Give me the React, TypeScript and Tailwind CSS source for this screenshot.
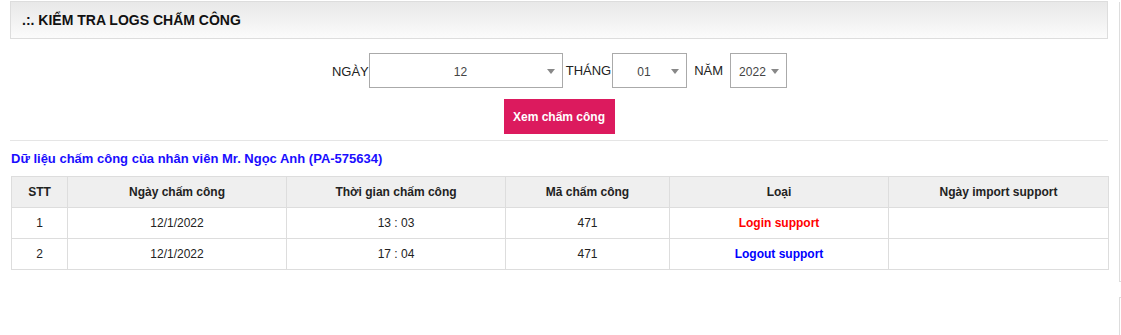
const ROWS = [
  { stt: 1, ngay: '12/1/2022', gio: '13 : 03', ma: '471', loai: 'Login support', color: 'text-[#ff0000]' },
  { stt: 2, ngay: '12/1/2022', gio: '17 : 04', ma: '471', loai: 'Logout support', color: 'text-[#0000ff]' },
]

function Select({ value, w, pl }: { value: string; w: string; pl: string }) {
  return (
    <div className={`${w} h-[35px] border border-[#aaa] bg-white flex items-center relative`}>
      <span className={`${pl} text-[12px] text-[#444] leading-none pt-[3px]`}>{value}</span>
      <span className="absolute right-[7px] top-[15px] w-0 h-0 border-l-[4px] border-r-[4px] border-t-[5px] border-l-transparent border-r-transparent border-t-[#888]" />
    </div>
  )
}

export default function App() {
  return (
    <div className="flex font-['Liberation_Sans',Arial,sans-serif] text-[#222] bg-white h-[335px] overflow-hidden">
      <div className="w-[1119px] shrink-0 pl-[10px] pr-[11px] pt-[1px]">
        {/* Header */}
        <div className="h-[38px] border border-[#ddd] bg-gradient-to-b from-[#e8e8e8] to-[#fbfbfb] flex items-center pl-[11px]">
          <span className="text-[14px] font-bold text-[#111]">.:. KIỂM TRA LOGS CHẤM CÔNG</span>
        </div>

        {/* Form */}
        <div className="flex justify-center items-start mt-[14px] text-[13px] text-[#222]">
          <span className="mt-[9px] ml-[1px]">NGÀY</span>
          <Select value="12" w="w-[194px]" pl="pl-[84px]" />
          <span className="mt-[8px] ml-[3px] mr-[1px]">THÁNG</span>
          <Select value="01" w="w-[75px]" pl="pl-[24px]" />
          <span className="mt-[8px] ml-[7px] mr-[7px]">NĂM</span>
          <Select value="2022" w="w-[57px]" pl="pl-[8px]" />
        </div>
        <div className="flex justify-center mt-[11px]">
          <button className="w-[111px] h-[35px] bg-[#dc1a5e] text-white text-[12px] font-bold">Xem chấm công</button>
        </div>
        <div className="border-t border-[#e5e5e5] mt-[6px]" />

        {/* Title */}
        <div className="mt-[8px] ml-[1px] text-[13px] font-bold text-[#1a0dff]">Dữ liệu chấm công của nhân viên Mr. Ngọc Anh (PA-575634)</div>

        <table className="mt-[7px] ml-[1px] w-[1097px] border-collapse text-[12px] text-[#222] table-fixed">
          <colgroup>
            <col className="w-[56px]" />
            <col className="w-[219px]" />
            <col className="w-[219px]" />
            <col className="w-[164px]" />
            <col className="w-[219px]" />
            <col className="w-[220px]" />
          </colgroup>
          <thead>
            <tr className="bg-[#efefef] h-[31px]">
              {['STT', 'Ngày chấm công', 'Thời gian chấm công', 'Mã chấm công', 'Loại', 'Ngày import support'].map((h) => (
                <th key={h} className="border border-[#ddd] font-bold text-center align-middle">{h}</th>
              ))}
            </tr>
          </thead>
          <tbody>
            {ROWS.map((r) => (
              <tr key={r.stt} className="h-[31px]">
                <td className="border border-[#ddd] text-center">{r.stt}</td>
                <td className="border border-[#ddd] text-center">{r.ngay}</td>
                <td className="border border-[#ddd] text-center">{r.gio}</td>
                <td className="border border-[#ddd] text-center">{r.ma}</td>
                <td className={`border border-[#ddd] text-center font-bold ${r.color}`}>{r.loai}</td>
                <td className="border border-[#ddd]" />
              </tr>
            ))}
          </tbody>
        </table>
      </div>

      {/* right column edge */}
      <div className="flex-1 flex flex-col">
        <div className="h-[292px] mt-[2px] border-l border-b border-[#ddd]" />
        <div className="h-[40px] mt-[15px] border-l border-t border-[#ddd]" />
      </div>
    </div>
  )
}
